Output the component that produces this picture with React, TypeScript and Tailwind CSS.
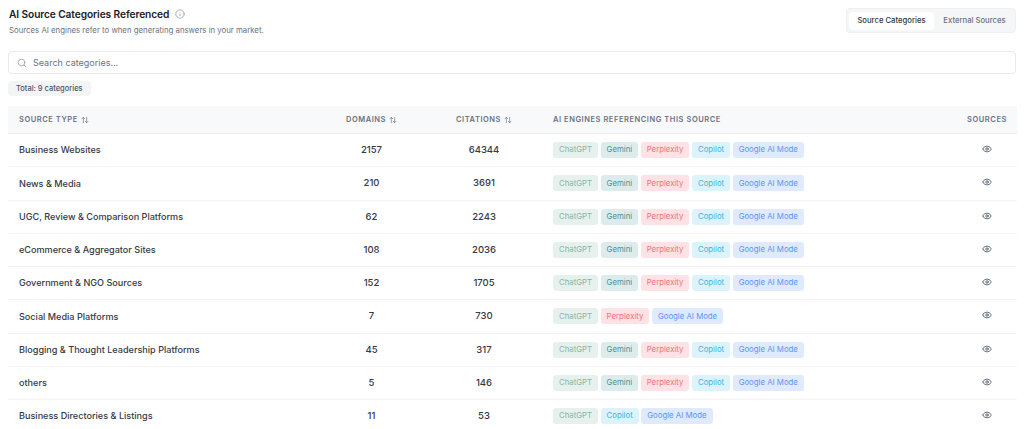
import { ArrowUpDown, Eye, Info, Search } from 'lucide-react'

const ENGINE_STYLES: Record<string, string> = {
  ChatGPT: 'bg-[#e6f1ee] text-[#86b5a5]',
  Gemini: 'bg-[#dcecec] text-[#4f8f92]',
  Perplexity: 'bg-[#fee2e5] text-[#f0727f]',
  Copilot: 'bg-[#dcf3fb] text-[#3fb4de]',
  'Google AI Mode': 'bg-[#e0eaff] text-[#5c93f7]',
}

const ALL = ['ChatGPT', 'Gemini', 'Perplexity', 'Copilot', 'Google AI Mode']

const rows = [
  { name: 'Business Websites', domains: 2157, citations: 64344, engines: ALL },
  { name: 'News & Media', domains: 210, citations: 3691, engines: ALL },
  { name: 'UGC, Review & Comparison Platforms', domains: 62, citations: 2243, engines: ALL },
  { name: 'eCommerce & Aggregator Sites', domains: 108, citations: 2036, engines: ALL },
  { name: 'Government & NGO Sources', domains: 152, citations: 1705, engines: ALL },
  { name: 'Social Media Platforms', domains: 7, citations: 730, engines: ['ChatGPT', 'Perplexity', 'Google AI Mode'] },
  { name: 'Blogging & Thought Leadership Platforms', domains: 45, citations: 317, engines: ALL },
  { name: 'others', domains: 5, citations: 146, engines: ALL },
  { name: 'Business Directories & Listings', domains: 11, citations: 53, engines: ['ChatGPT', 'Copilot', 'Google AI Mode'] },
]

function SortIcon() {
  return <ArrowUpDown className="ml-[3px] h-[8px] w-[8px] text-gray-500" />
}

export default function App() {
  return (
    <div className="h-[429px] overflow-hidden bg-white px-2 pt-2 font-['Inter',sans-serif] text-[#1f2430]">
      {/* Header */}
      <div className="flex items-start justify-between">
        <div>
          <div className="flex items-center gap-[6px] pl-[1px]">
            <h1 className="text-[10.2px] leading-[12px] font-semibold tracking-[-0.1px] text-[#1b2029]">AI Source Categories Referenced</h1>
            <Info className="h-[10px] w-[10px] text-gray-400" />
          </div>
          <p className="mt-[4px] pl-[1px] text-[7.8px] leading-[12px] text-gray-500">Sources AI engines refer to when generating answers in your market.</p>
        </div>
        <div className="flex h-[25px] w-[170px] items-center rounded bg-[#f5f6f8] border border-[#eef0f3] pl-[2px] text-[7.7px]">
          <div className="flex h-[18px] w-[85px] items-center justify-center rounded-sm bg-white font-medium text-[#2f3542]">Source Categories</div>
          <div className="flex h-[18px] flex-1 items-center justify-center font-medium text-gray-500">External Sources</div>
        </div>
      </div>

      {/* Search */}
      <div className="mt-[15px] flex h-[23px] items-center gap-[6px] rounded-[4px] border border-[#e8eaee] px-2">
        <Search className="h-[10px] w-[10px] text-gray-400" />
        <span className="text-[9px] text-gray-500">Search categories...</span>
      </div>

      <div className="mt-[7px] flex h-[15px] w-fit items-center rounded-[4px] bg-[#f2f4f6] px-2 text-[7.5px] font-medium text-gray-600">Total: 9 categories</div>

      {/* Table */}
      <div className="mt-[10px] w-[1009px]">
        <div className="grid h-[28px] grid-cols-[310px_107px_118px_1fr_60px] items-center border-b border-[#eceef2] bg-[#f8f9fb] text-[7.5px] font-semibold tracking-[0.55px] text-gray-500 uppercase">
          <span className="inline-flex items-center pl-[11px]">Source Type<SortIcon /></span>
          <span className="inline-flex items-center justify-center">Domains<SortIcon /></span>
          <span className="inline-flex items-center justify-center">Citations<SortIcon /></span>
          <span className="pl-[10px]">AI Engines Referencing This Source</span>
          <span className="text-center">Sources</span>
        </div>
        {rows.map((row) => (
          <div key={row.name} className="grid h-[33.25px] grid-cols-[310px_107px_118px_1fr_60px] items-center border-b border-[#f3f4f6] text-[#343a46]">
            <div className="pl-[11px] text-[9.1px] font-medium">{row.name}</div>
            <div className="text-center text-[9.5px] font-medium">{row.domains}</div>
            <div className="text-center text-[9.5px] font-medium">{row.citations}</div>
            <div className="flex gap-[2.5px] pl-[10px]">
              {row.engines.map((engine) => (
                <span key={engine} className={`flex h-[16px] items-center rounded-[3px] px-[6px] text-[7.8px] ${ENGINE_STYLES[engine]}`}>{engine}</span>
              ))}
            </div>
            <Eye className="mx-auto h-[10px] w-[10px] -translate-y-[1px] text-gray-600" />
          </div>
        ))}
      </div>
    </div>
  )
}
